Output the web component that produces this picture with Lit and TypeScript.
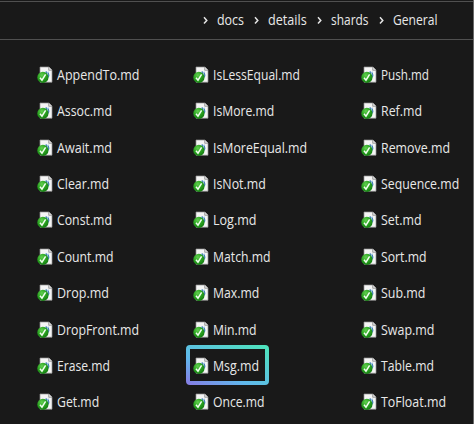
import { LitElement, html, svg, css } from "lit";
import { customElement, property } from "lit/decorators.js";

type Entry = [name: string, width: number];

const crumbs: Entry[] = [["docs", 27], ["details", 38.7], ["shards", 37.5], ["General", 44.5]];
const columns: Entry[][] = [
  [["AppendTo.md", 82.5], ["Assoc.md", 55], ["Await.md", 55], ["Clear.md", 52], ["Const.md", 55], ["Count.md", 56.5], ["Drop.md", 52], ["DropFront.md", 82], ["Erase.md", 53], ["Get.md", 42.2]],
  [["IsLessEqual.md", 87], ["IsMore.md", 61.2], ["IsMoreEqual.md", 94], ["IsNot.md", 52.8], ["Log.md", 43.5], ["Match.md", 57.5], ["Max.md", 46.2], ["Min.md", 43.5], ["Msg.md", 46], ["Once.md", 51.5]],
  [["Push.md", 48], ["Ref.md", 41], ["Remove.md", 69], ["Sequence.md", 78.2], ["Set.md", 40.5], ["Sort.md", 45.5], ["Sub.md", 44.5], ["Swap.md", 53.5], ["Table.md", 53], ["ToFloat.md", 65]],
];

@customElement("fit-label")
class FitLabel extends LitElement {
  @property() text = "";
  @property({ type: Number }) width = 50;
  static styles = css`
    :host { display: block; height: 20px; }
    svg { display: block; overflow: visible; }
    text { font: 13.6px "Open Sans", "Noto Sans", sans-serif; fill: #e8e8e8; }
  `;
  render() {
    return html`<svg width=${this.width} height="20">
      <text x="0" y="15" textLength=${this.width} lengthAdjust="spacingAndGlyphs">${this.text}</text>
    </svg>`;
  }
}

@customElement("file-icon")
class FileIcon extends LitElement {
  static styles = css`
    :host { display: block; width: 16px; height: 18px; }
    svg { display: block; }
  `;
  render() {
    return html`<svg width="16" height="18" viewBox="0 0 16 18">
      <defs>
        <radialGradient id="g" cx=".4" cy=".3" r=".7">
          <stop offset="0" stop-color="#62cf50" /><stop offset=".55" stop-color="#2ba321" /><stop offset="1" stop-color="#157d12" />
        </radialGradient>
      </defs>
      <path d="M3 1H12L15 4V16.2H3Z" fill="#f5f5f5" stroke="#929292" stroke-width=".7" />
      <path d="M11.7 1V4.3H15" fill="#ddd" stroke="#858585" stroke-width=".7" />
      <path d="M7 6.5L9 5L10 6L12 5.5V8L13 9L12 11L11 12.5H8Z" fill="#9cc3e0" />
      <path d="M9.5 5.5V8M11.5 7V11" stroke="#4a83b3" stroke-width="1" />
      <circle cx="5.9" cy="11.4" r="5.6" fill="url(#g)" />
      <path d="M3 11.7L5 14.2L8.6 8.4" fill="none" stroke="#f2fff0" stroke-width="1.5" />
    </svg>`;
  }
}

@customElement("app-root")
class AppRoot extends LitElement {
  static styles = css`
    :host { display: block; width: 474px; height: 424px; background: #191919; overflow: hidden; }
    .window { box-sizing: border-box; height: 424px; padding-top: 1px; border-right: 1px solid #6a6a6a; }
    .bar { box-sizing: border-box; height: 39px; margin-bottom: 16.8px; padding: 8px 0 0 201.5px; display: flex; border-bottom: 1px solid #505050; border-top: 1px solid #505050; }
    .crumb { display: flex; height: 20px; }
    .chevron { width: 15.5px; height: 20px; }
    .crumb + .crumb { margin-left: 8.9px; }
    .files { display: grid; grid-template-columns: 156px 167.5px 140px; padding-left: 37px; }
    .file { display: flex; align-items: center; height: 36.38px; position: relative; }
    file-icon { margin-right: 4px; }
    .ring { position: absolute; left: -7px; top: -2.8px; }
  `;
  render() {
    return html`<div class="window">
      <nav class="bar">
        ${crumbs.map(([n, w]) => html`<div class="crumb">
          <svg class="chevron" viewBox="0 0 15.5 20"><path d="M2 7.3L4.8 10.4L2 13.5" fill="none" stroke="#e4e4e4" stroke-width="1.5" /></svg>
          <fit-label .text=${n} .width=${w}></fit-label></div>`)}
      </nav>
      <main class="files">
        ${columns.map((col) => html`<div>${col.map(([n, w]) => html`<div class="file">
          ${n === "Msg.md" ? svg`<svg class="ring" width="84" height="41">
            <defs><linearGradient id="r" x1="0" y1="1" x2="1" y2="0"><stop offset="0" stop-color="#8580e5" /><stop offset=".35" stop-color="#60b8ec" /><stop offset="1" stop-color="#4ee3bd" /></linearGradient></defs>
            <rect x="2" y="2" width="79" height="36" rx="2" fill="none" stroke="url(#r)" stroke-width="4" /></svg>` : ""}
          <file-icon></file-icon><fit-label .text=${n} .width=${w}></fit-label></div>`)}</div>`)}
      </main>
    </div>`;
  }
}
